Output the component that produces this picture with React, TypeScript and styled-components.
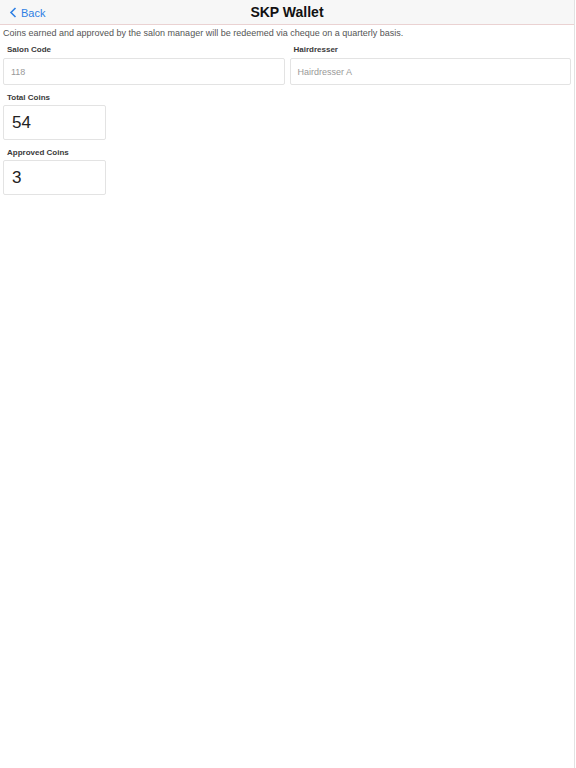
import React from "react";
import styled, { createGlobalStyle } from "styled-components";

const GlobalStyle = createGlobalStyle`
  html, body {
    margin: 0;
    padding: 0;
    background: #ffffff;
    font-family: "Liberation Sans", Arial, sans-serif;
  }
`;

const Page = styled.div`
  min-height: 768px;
  border-right: 1px solid #e2e2e2;
  box-sizing: border-box;
  width: 575px;
`;

const Header = styled.header`
  position: relative;
  display: flex;
  align-items: center;
  justify-content: center;
  height: 25px;
  background: #f7f7f7;
  border-bottom: 1px solid #ead2d2;
  box-sizing: border-box;
`;

const BackLink = styled.a`
  position: absolute;
  left: 9px;
  top: 0;
  height: 25px;
  display: flex;
  align-items: center;
  gap: 4px;
  color: #2f80e4;
  font-size: 11px;
  text-decoration: none;
`;

const Title = styled.h1`
  margin: 0;
  font-size: 14px;
  font-weight: 700;
  color: #111;
`;

const Content = styled.main`
  padding: 0 3px;
`;

const Notice = styled.p`
  margin: 3px 0 0;
  font-size: 9px;
  line-height: 11px;
  color: #555;
`;

const Row = styled.div`
  display: grid;
  grid-template-columns: 1fr 1fr;
  column-gap: 5px;
`;

const Field = styled.div`
  display: flex;
  flex-direction: column;
`;

const Label = styled.label<{ $large?: boolean }>`
  margin: ${(p) => (p.$large ? "8px 0 2px 4px" : "6px 0 3px 4px")};
  font-size: 8px;
  line-height: 10px;
  font-weight: 700;
  color: #3a3a3a;
`;

const Input = styled.div<{ $large?: boolean }>`
  display: flex;
  align-items: center;
  box-sizing: border-box;
  width: ${(p) => (p.$large ? "103px" : "100%")};
  height: ${(p) => (p.$large ? "35px" : "27px")};
  padding-left: ${(p) => (p.$large ? "8px" : "7px")};
  border: 1px solid #e3e3e3;
  border-radius: 2px;
  font-size: ${(p) => (p.$large ? "17px" : "9px")};
  color: ${(p) => (p.$large ? "#222" : "#999")};
`;

const Chevron = () => (
  <svg width="8" height="11" viewBox="0 0 8 11">
    <path d="M6.5 1 L2 5.5 L6.5 10" fill="none" stroke="#2f80e4" strokeWidth="1.6" />
  </svg>
);

export default function App() {
  return (
    <Page>
      <GlobalStyle />
      <Header>
        <BackLink href="#">
          <Chevron />
          Back
        </BackLink>
        <Title>SKP Wallet</Title>
      </Header>
      <Content>
        <Notice>
          Coins earned and approved by the salon manager will be redeemed via cheque on a quarterly basis.
        </Notice>
        <Row>
          <Field>
            <Label>Salon Code</Label>
            <Input>118</Input>
          </Field>
          <Field>
            <Label>Hairdresser</Label>
            <Input>Hairdresser A</Input>
          </Field>
        </Row>
        <Field>
          <Label $large>Total Coins</Label>
          <Input $large>54</Input>
        </Field>
        <Field>
          <Label $large>Approved Coins</Label>
          <Input $large>3</Input>
        </Field>
      </Content>
    </Page>
  );
}
